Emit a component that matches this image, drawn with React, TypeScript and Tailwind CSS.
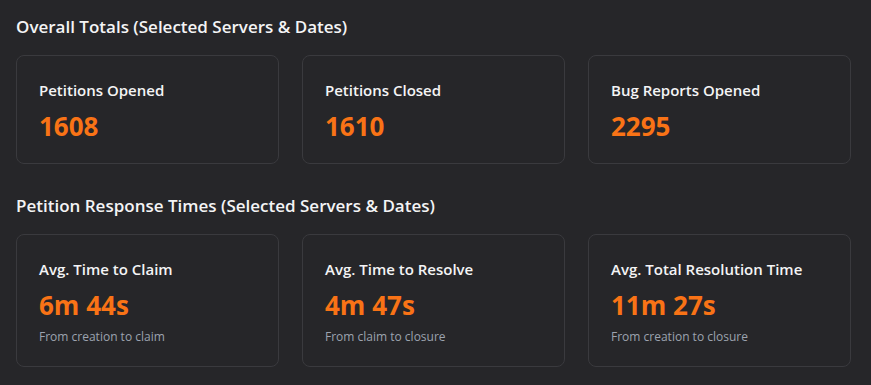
const totals = [
  { label: "Petitions Opened", value: "1608" },
  { label: "Petitions Closed", value: "1610" },
  { label: "Bug Reports Opened", value: "2295" },
];

const times = [
  { label: "Avg. Time to Claim", value: "6m 44s", note: "From creation to claim" },
  { label: "Avg. Time to Resolve", value: "4m 47s", note: "From claim to closure" },
  { label: "Avg. Total Resolution Time", value: "11m 27s", note: "From creation to closure" },
];

const StatCard = ({ label, value, note }: { label: string; value: string; note?: string }) => (
  <div className="rounded-lg border border-[#3a3a3e] bg-[#262629] px-[22px] pt-[22px] pb-[21px]">
    <p className="text-[15px] leading-6 font-semibold text-[#f4f4f5]">{label}</p>
    <p className="mt-2 text-[26px] leading-8 font-bold text-[#f97316]">{value}</p>
    {note && <p className="mt-2 text-xs leading-4 text-[#9ca3af]">{note}</p>}
  </div>
);

export default function App() {
  return (
    <div
      className="min-h-screen bg-[#262629] pl-4 pr-5 pt-[13px]"
      style={{ fontFamily: '"Open Sans", "Noto Sans", sans-serif' }}
    >
      <h2 className="mb-[14px] text-[17px] leading-7 font-semibold text-[#f4f4f5]">
        Overall Totals (Selected Servers &amp; Dates)
      </h2>
      <div className="grid grid-cols-3 gap-[23px]">
        {totals.map((t) => (
          <StatCard key={t.label} {...t} />
        ))}
      </div>

      <h2 className="mt-7 mb-[14px] text-[17px] leading-7 font-semibold text-[#f4f4f5]">
        Petition Response Times (Selected Servers &amp; Dates)
      </h2>
      <div className="grid grid-cols-3 gap-[23px]">
        {times.map((t) => (
          <StatCard key={t.label} {...t} />
        ))}
      </div>
    </div>
  );
}
